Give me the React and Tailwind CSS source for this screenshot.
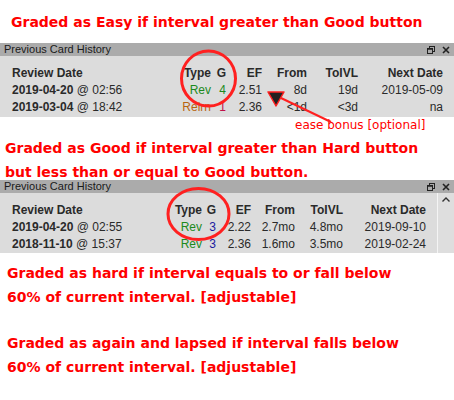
import React from "react";

const red = "text-[#ff0000] font-bold text-[14px] leading-[24px] [font-family:'DejaVu_Sans',sans-serif]";

function TitleBar() {
  return (
    <div className="h-[13px] bg-[#ababab] flex items-center justify-between pl-[4px] pr-[4px] text-[11px] leading-[13px] text-[#1a1a1a]">
      <span>Previous Card History</span>
      <span className="flex items-center gap-[7px]">
        <svg width="8" height="8" viewBox="0 0 8 8">
          <rect x="2.5" y="0.5" width="5" height="5" fill="none" stroke="#222" />
          <rect x="0.5" y="2.5" width="5" height="5" fill="#ababab" stroke="#222" />
          <line x1="0.5" y1="3" x2="5.5" y2="3" stroke="#222" strokeWidth="1.5" />
        </svg>
        <svg width="8" height="8" viewBox="0 0 8 8">
          <path d="M1 1 L7 7 M7 1 L1 7" stroke="#222" strokeWidth="1.6" />
        </svg>
      </span>
    </div>
  );
}

function Row({ cols, cells }) {
  return (
    <div className="flex h-[17px] items-center leading-[17px]">
      {cells.map((c, i) => (
        <div key={i} className={`${cols[i]} ${i === 0 ? "text-left" : "text-right"} whitespace-nowrap`}>
          {c}
        </div>
      ))}
    </div>
  );
}

function Panel1() {
  const cols = ["w-[160px]", "w-[39px]", "w-[15px]", "w-[36px]", "w-[45px]", "w-[51px]", "w-[85px]"];
  return (
    <div>
      <TitleBar />
      <div className="bg-[#dcdcdc] h-[61px] pt-[9px] pl-[12px] text-[12px] text-[#2a2a2a]">
        <Row cols={cols} cells={[
          <b>Review Date</b>, <b>Type</b>, <b>G</b>, <b>EF</b>, <b>From</b>, <b>ToIVL</b>, <b>Next Date</b>,
        ]} />
        <Row cols={cols} cells={[
          <span><b>2019-04-20</b> @ 02:56</span>,
          <span className="text-[#1d8a1d]">Rev</span>,
          <span className="text-[#1d8a1d]">4</span>,
          "2.51", "8d", "19d", "2019-05-09",
        ]} />
        <Row cols={cols} cells={[
          <span><b>2019-03-04</b> @ 18:42</span>,
          <span className="text-[#b8650f]">Relrn</span>,
          <span className="text-[#c0104a]">1</span>,
          "2.36", "<1d", "<3d", "na",
        ]} />
      </div>
    </div>
  );
}

function Panel2() {
  const cols = ["w-[148px]", "w-[42px]", "w-[14px]", "w-[35px]", "w-[44px]", "w-[48px]", "w-[83px]"];
  return (
    <div>
      <TitleBar />
      <div className="bg-[#dcdcdc] h-[60px] flex text-[12px] text-[#2a2a2a]">
        <div className="flex-1 pt-[9px] pl-[12px]">
          <Row cols={cols} cells={[
            <b>Review Date</b>, <b>Type</b>, <b>G</b>, <b>EF</b>, <b>From</b>, <b>ToIVL</b>, <b>Next Date</b>,
          ]} />
          <Row cols={cols} cells={[
            <span><b>2019-04-20</b> @ 02:55</span>,
            <span className="text-[#1d8a1d]">Rev</span>,
            <span className="text-[#1a1aa0]">3</span>,
            "2.22", "2.7mo", "4.8mo", "2019-09-10",
          ]} />
          <Row cols={cols} cells={[
            <span><b>2018-11-10</b> @ 15:37</span>,
            <span className="text-[#1d8a1d]">Rev</span>,
            <span className="text-[#1a1aa0]">3</span>,
            "2.36", "1.6mo", "3.5mo", "2019-02-24",
          ]} />
        </div>
        <div className="w-[17px] border-l border-[#f4f4f4] bg-[#dedede] flex justify-center pt-[4px]">
          <svg width="8" height="5" viewBox="0 0 8 5">
            <path d="M0.5 4.5 L4 1 L7.5 4.5" fill="none" stroke="#333" strokeWidth="1.4" />
          </svg>
        </div>
      </div>
    </div>
  );
}

export default function App() {
  return (
    <div className="relative w-[454px] h-[400px] bg-white overflow-hidden [font-family:'Liberation_Sans',Arial,sans-serif]">
      <div className={`h-[43px] pt-[10px] pl-[11px] ${red}`}>
        Graded as Easy if interval greater than Good button
      </div>
      <Panel1 />
      <div className="h-[16px] leading-[16px] pl-[295px] text-[12px] text-[#ff0000] [font-family:'DejaVu_Sans',sans-serif]">
        ease bonus [optional]
      </div>
      <div className={`h-[47px] pt-[3px] pl-[5px] ${red}`}>
        <div>Graded as Good if interval greater than Hard button</div>
        <div>but less than or equal to Good button.</div>
      </div>
      <Panel2 />
      <div className={`pt-[8px] pl-[7px] ${red}`}>
        <div>Graded as hard if interval equals to or fall below</div>
        <div>60% of current interval. [adjustable]</div>
      </div>
      <div className={`pt-[22px] pl-[7px] ${red}`}>
        <div>Graded as again and lapsed if interval falls below</div>
        <div>60% of current interval. [adjustable]</div>
      </div>
      <svg className="absolute left-0 top-0 pointer-events-none" width="454" height="400" viewBox="0 0 454 400">
        <ellipse cx="208.5" cy="78.5" rx="27" ry="27.5" fill="none" stroke="#ff2020" strokeWidth="3" />
        <ellipse cx="198.5" cy="214" rx="30.5" ry="25.5" fill="none" stroke="#ff2020" strokeWidth="3" />
        <line x1="281" y1="98" x2="331" y2="122" stroke="#ff2020" strokeWidth="2" />
        <path d="M268 92 L284 92 L276 106 Z" fill="#222" stroke="#ff2020" strokeWidth="1.5" strokeLinejoin="round" />
      </svg>
    </div>
  );
}
